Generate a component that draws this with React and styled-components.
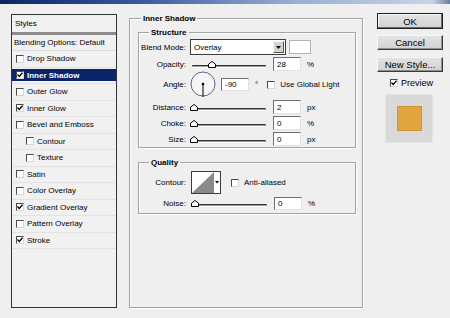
import React from 'react';
import styled, { createGlobalStyle } from 'styled-components';

const GlobalStyle = createGlobalStyle`
  html, body {
    margin: 0;
    padding: 0;
    background: #efefef;
  }
  body {
    font-family: "Liberation Sans", Arial, sans-serif;
    font-size: 8px;
    color: #000;
  }
`;

const Window = styled.div`
  width: 450px;
  height: 318px;
  background: #efefef;
  overflow: hidden;
`;

const TitleBar = styled.div`
  height: 4px;
  background: linear-gradient(90deg, #0b2563 0%, #37569a 30%, #98aed3 65%, #c9d4e4 96%, #6b7fa6 100%);
`;

const Body = styled.div`
  display: flex;
  align-items: flex-start;
  padding: 10px 0 0 11px;
`;

/* ---------- left styles list ---------- */

const StylesPanel = styled.div`
  width: 106px;
  height: 294px;
  box-sizing: border-box;
  border: 1px solid #343434;
  background: #f1f1f1;
`;

const PanelHeader = styled.div`
  height: 17px;
  line-height: 17px;
  padding-left: 3px;
`;

const HeaderBar = styled.div`
  height: 3px;
  background: #8e8e8e;
`;

const BlendingRow = styled.div`
  height: 16px;
  line-height: 16px;
  padding-left: 2px;
  box-sizing: border-box;
  border-bottom: 1px solid #dcdcdc;
`;

const StyleRow = styled.div`
  height: 16.5px;
  box-sizing: border-box;
  display: flex;
  align-items: center;
  gap: 3px;
  padding-left: ${p => (p.$indent ? 14 : 4)}px;
  border-bottom: 1px solid #e3e3e3;
  background: ${p => (p.$selected ? '#0a246a' : 'transparent')};
  box-shadow: ${p => (p.$selected ? 'inset 0 1px 0 #f1f1f1, inset 0 -2px 0 #f1f1f1' : 'none')};
  color: ${p => (p.$selected ? '#fff' : '#000')};
  font-weight: ${p => (p.$selected ? 'bold' : 'normal')};
`;

const Box = styled.span`
  display: inline-flex;
  align-items: center;
  justify-content: center;
  width: 8px;
  height: 8px;
  box-sizing: border-box;
  flex: none;
  background: #fff;
  border-style: solid;
  border-width: 1px;
  border-color: #4a4a4a #d6d6d6 #d6d6d6 #4a4a4a;
  margin-left: ${p => p.$ml || 0}px;
`;

const CheckBox = ({ checked, ml }) => (
  <Box $ml={ml}>
    {checked && (
      <svg width="6" height="6" viewBox="0 0 6 6">
        <path d="M0.5 2.5 L2.2 4.5 L5.5 0.8" fill="none" stroke="#000" strokeWidth="1.3" />
      </svg>
    )}
  </Box>
);

const styleItems = [
  { name: 'Drop Shadow' },
  { name: 'Inner Shadow', checked: true, selected: true },
  { name: 'Outer Glow' },
  { name: 'Inner Glow', checked: true },
  { name: 'Bevel and Emboss' },
  { name: 'Contour', indent: true },
  { name: 'Texture', indent: true },
  { name: 'Satin' },
  { name: 'Color Overlay' },
  { name: 'Gradient Overlay', checked: true },
  { name: 'Pattern Overlay' },
  { name: 'Stroke', checked: true },
];

/* ---------- group boxes ---------- */

const Group = styled.div`
  position: relative;
  box-sizing: border-box;
  border: 1px solid #a3a3a3;
  box-shadow: 1px 1px 0 #fff, inset 1px 1px 0 #fff;
  width: ${p => p.$w}px;
  height: ${p => p.$h}px;
  margin-top: ${p => p.$mt || 0}px;
  margin-left: ${p => p.$ml || 0}px;
  padding: ${p => p.$pad || '0'};
`;

const Legend = styled.span`
  position: absolute;
  top: -6px;
  left: ${p => p.$left}px;
  padding: 0 2px;
  background: #efefef;
  font-weight: bold;
  line-height: 11px;
`;

/* ---------- rows & controls ---------- */

const Row = styled.div`
  display: flex;
  align-items: center;
  height: ${p => p.$h}px;
  margin-top: ${p => p.$mt || 0}px;
`;

const Label = styled.span`
  width: 47px;
  text-align: right;
  flex: none;
`;

const Select = styled.div`
  margin-left: 4px;
  width: 96px;
  height: 16px;
  box-sizing: border-box;
  border: 1px solid #3c3c3c;
  background: #fff;
  display: flex;
  align-items: center;
  justify-content: space-between;
  padding-left: 3px;
`;

const SelectArrow = styled.span`
  width: 11px;
  height: 12px;
  margin-right: 1px;
  background: #d6d3cc;
  border-style: solid;
  border-width: 1px;
  border-color: #f8f8f8 #555 #555 #f8f8f8;
  box-sizing: border-box;
  display: flex;
  align-items: center;
  justify-content: center;
`;

const Swatch = styled.div`
  margin-left: 3px;
  width: 22px;
  height: 14px;
  box-sizing: border-box;
  background: #fff;
  border: 1px solid #b4b4b4;
`;

const SliderWrap = styled.div`
  position: relative;
  width: 74px;
  height: 7px;
  margin-left: ${p => p.$ml}px;
  flex: none;
`;

const Track = styled.div`
  margin-top: 4px;
  height: 1px;
  background: #9d9d9d;
  border-top: 1px solid #333;
  border-bottom: 1px solid #fff;
  border-radius: 1px;
`;

const Thumb = styled.svg`
  position: absolute;
  top: 0;
`;

const Slider = ({ pos, ml = 6 }) => (
  <SliderWrap $ml={ml}>
    <Track />
    <Thumb width="8" height="7" viewBox="0 0 8 7" style={{ left: pos - 4 }}>
      <path d="M0.5 6.5 V3.2 L4 0.5 L7.5 3.2 V6.5 Z" fill="#fff" stroke="#000" strokeWidth="1" />
    </Thumb>
  </SliderWrap>
);

const Field = styled.div`
  margin-left: ${p => p.$ml}px;
  width: 28px;
  height: ${p => p.$h || 14}px;
  box-sizing: border-box;
  background: #fff;
  border-style: solid;
  border-width: 1px;
  border-color: #6f6f6f #e2e2e2 #e2e2e2 #6f6f6f;
  padding-left: 3px;
  display: flex;
  align-items: center;
  flex: none;
`;

const Unit = styled.span`
  margin-left: ${p => p.$ml || 6}px;
`;

const Dial = styled.svg`
  margin-left: 4px;
  flex: none;
`;

const ContourBox = styled.div`
  margin-left: 5px;
  width: 30px;
  height: 23px;
  box-sizing: border-box;
  border: 1px solid #3c3c3c;
  background: #fff;
  display: flex;
`;

const SliderRow = ({ label, value, unit, pos, mt }) => (
  <Row $h={14} $mt={mt}>
    <Label>{label}</Label>
    <Slider pos={pos} />
    <Field $ml={7}>{value}</Field>
    <Unit>{unit}</Unit>
  </Row>
);

/* ---------- right column ---------- */

const RightCol = styled.div`
  margin-left: 14px;
  margin-top: -1px;
  width: 66px;
  display: flex;
  flex-direction: column;
`;

const Button = styled.div`
  height: ${p => p.$h}px;
  margin-top: ${p => p.$mt || 0}px;
  box-sizing: border-box;
  background: linear-gradient(#e2e2e2, #d2d2d2);
  border-style: solid;
  border-width: 1px;
  border-color: ${p => (p.$primary ? '#1e1e1e' : '#f6f6f6 #3a3a3a #3a3a3a #f6f6f6')};
  box-shadow: ${p => (p.$primary ? 'inset -1px -1px 0 #6a6a6a, inset 1px 1px 0 #fafafa' : 'inset -1px -1px 0 #8e8e8e')};
  display: flex;
  align-items: center;
  justify-content: center;
  font-size: 9.5px;
`;

const PreviewRow = styled.div`
  margin-top: 6px;
  margin-left: 13px;
  height: 9px;
  display: flex;
  align-items: center;
  gap: 3px;
  font-size: 9px;
`;

const PreviewBox = styled.div`
  margin-top: 7px;
  margin-left: 8px;
  width: 48px;
  height: 49px;
  box-sizing: border-box;
  background: #d9d9d9;
  border: 1px solid #e4e4e4;
  display: flex;
  align-items: center;
  justify-content: center;
`;

const PreviewChip = styled.div`
  width: 25px;
  height: 25px;
  box-sizing: border-box;
  background: #e2a641;
  border: 1px solid #cf9433;
`;

export default function App() {
  return (
    <Window>
      <GlobalStyle />
      <TitleBar />
      <Body>
        <StylesPanel>
          <PanelHeader>Styles</PanelHeader>
          <HeaderBar />
          <BlendingRow>Blending Options: Default</BlendingRow>
          {styleItems.map(item => (
            <StyleRow key={item.name} $indent={item.indent} $selected={item.selected}>
              <CheckBox checked={item.checked} />
              <span>{item.name}</span>
            </StyleRow>
          ))}
        </StylesPanel>

        <Group $w={234} $h={290} $mt={4} $ml={12} $pad="0 6px 0 8px">
          <Legend $left={11}>Inner Shadow</Legend>

          <Group $w={218} $h={116} $mt={13} $pad="6px 0 0 0">
            <Legend $left={10}>Structure</Legend>
            <Row $h={16}>
              <Label>Blend Mode:</Label>
              <Select>
                <span>Overlay</span>
                <SelectArrow>
                  <svg width="5" height="3" viewBox="0 0 5 3">
                    <path d="M0 0 H5 L2.5 3 Z" fill="#000" />
                  </svg>
                </SelectArrow>
              </Select>
              <Swatch />
            </Row>
            <SliderRow label="Opacity:" value="28" unit="%" pos={20} mt={2} />
            <Row $h={25} $mt={1}>
              <Label>Angle:</Label>
              <Dial width="26" height="27" viewBox="0 0 26 27">
                <circle cx="13" cy="13" r="12" fill="#f5f5f5" stroke="#59688e" strokeWidth="1" />
                <line x1="13" y1="13" x2="13" y2="26" stroke="#000" strokeWidth="1" />
                <circle cx="13" cy="13" r="1.3" fill="#000" />
              </Dial>
              <Field $ml={5} $h={13}>-90</Field>
              <Unit $ml={6}>°</Unit>
              <CheckBox ml={9} />
              <Unit $ml={5}>Use Global Light</Unit>
            </Row>
            <SliderRow label="Distance:" value="2" unit="px" pos={2} mt={3} />
            <SliderRow label="Choke:" value="0" unit="%" pos={2} mt={2} />
            <SliderRow label="Size:" value="0" unit="px" pos={2} mt={2} />
          </Group>

          <Group $w={218} $h={52} $mt={14}>
            <Legend $left={10}>Quality</Legend>
            <Row $h={23} $mt={8}>
              <Label>Contour:</Label>
              <ContourBox>
                <svg width="22" height="21" viewBox="0 0 22 21">
                  <path d="M0 21 L22 0 V21 Z" fill="#8a8a8a" />
                </svg>
                <svg width="6" height="21" viewBox="0 0 6 21">
                  <path d="M1 9 H5 L3 11.5 Z" fill="#000" />
                </svg>
              </ContourBox>
              <CheckBox ml={10} />
              <Unit $ml={5}>Anti-aliased</Unit>
            </Row>
            <Row $h={13} $mt={3}>
              <Label>Noise:</Label>
              <Slider pos={2} ml={7} />
              <Field $ml={7} $h={13}>0</Field>
              <Unit>%</Unit>
            </Row>
          </Group>
        </Group>

        <RightCol>
          <Button $h={16} $primary>OK</Button>
          <Button $h={15} $mt={6}>Cancel</Button>
          <Button $h={15} $mt={7}>New Style...</Button>
          <PreviewRow>
            <CheckBox checked />
            <span>Preview</span>
          </PreviewRow>
          <PreviewBox>
            <PreviewChip />
          </PreviewBox>
        </RightCol>
      </Body>
    </Window>
  );
}
